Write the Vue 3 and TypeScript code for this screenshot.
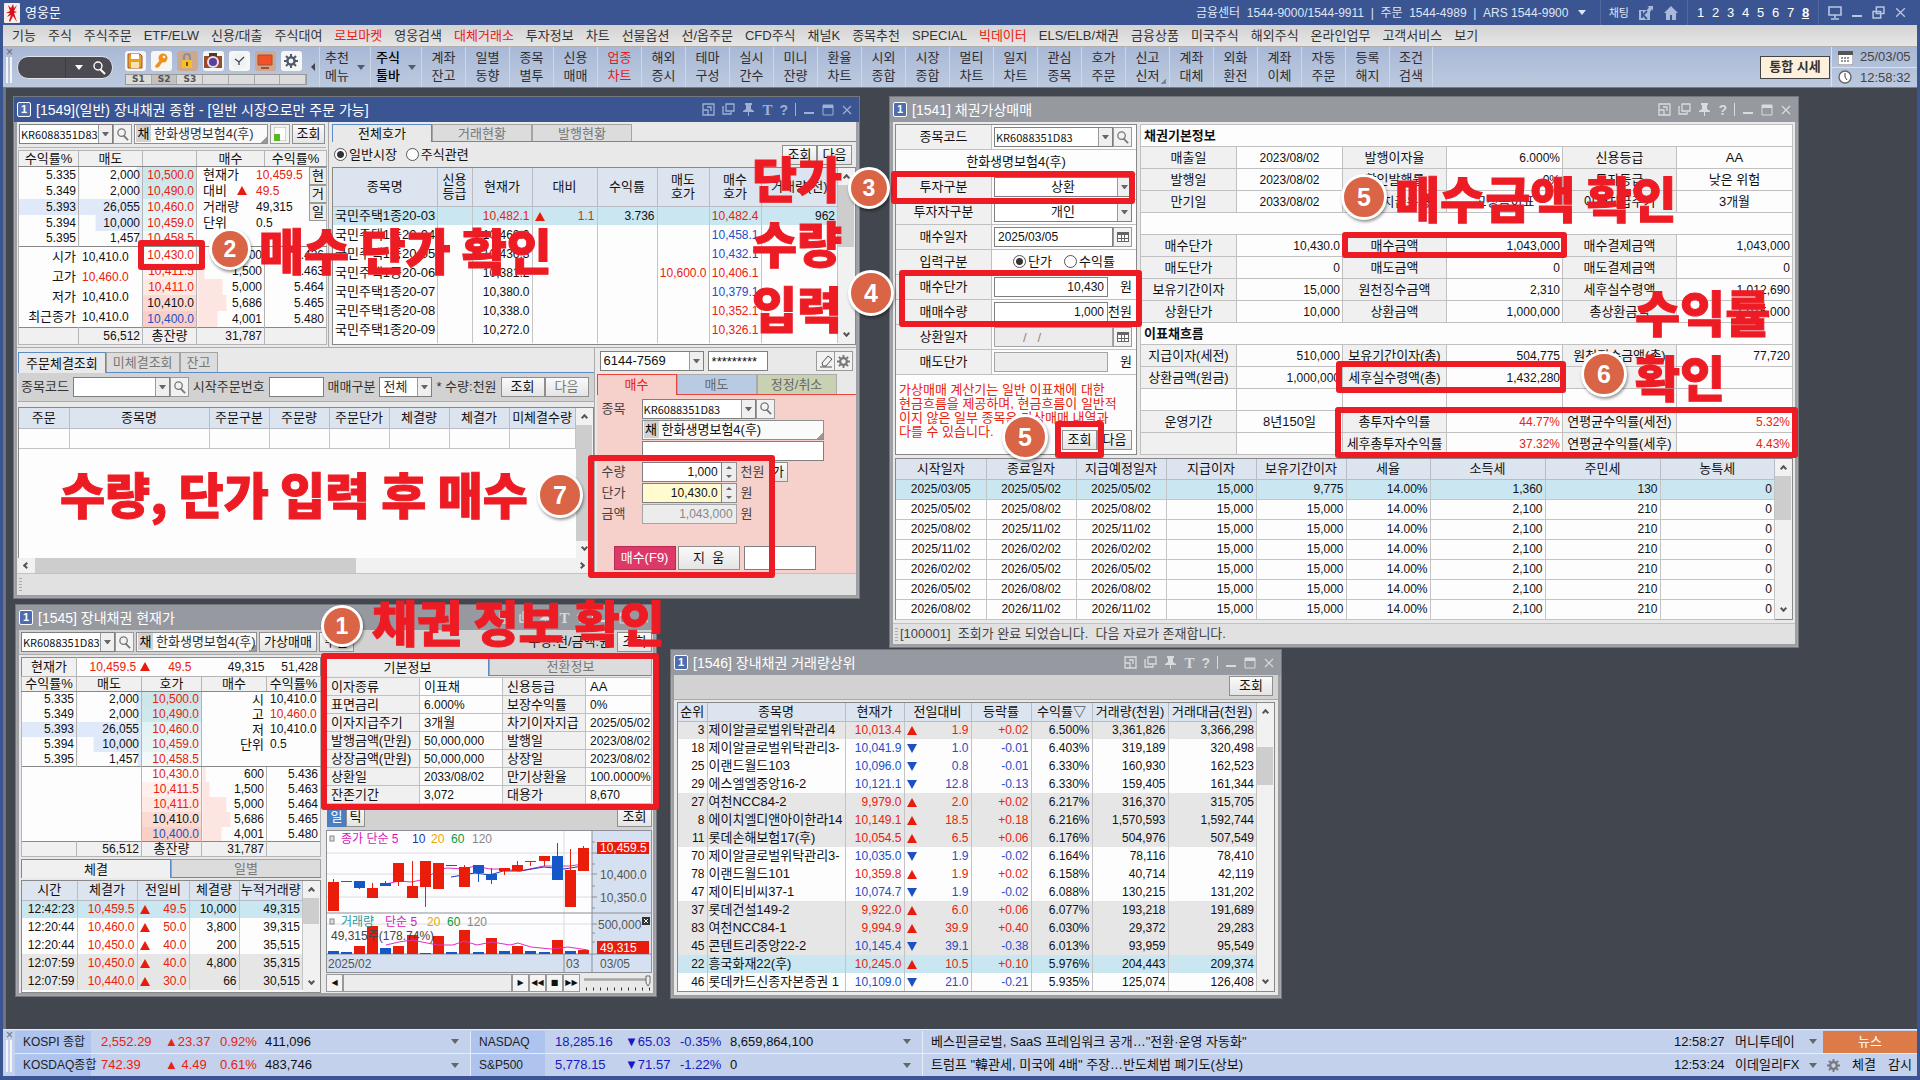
<script setup lang="ts">
interface Win { id: string; title: string; x: number; y: number; w: number; h: number; active?: boolean; textTool?: boolean }
interface Box { x: number; y: number; w: number; h: number }
interface Badge { n: number; x: number; y: number; big?: boolean }
interface Note { x: number; y: number; lines: string[] }
interface Level { yield: string; qty: string; price: string; tone: string; bar: number; bg: string }

const windows: Win[] = [
  { id: '1549', title: '[1549](일반) 장내채권 종합 - [일반 시장으로만 주문 가능]', x: 13, y: 96, w: 847, h: 503, active: true, textTool: true },
  { id: '1541', title: '[1541] 채권가상매매', x: 889, y: 96, w: 910, h: 552 },
  { id: '1545', title: '[1545] 장내채권 현재가', x: 15, y: 604, w: 642, h: 393, textTool: true },
  { id: '1546', title: '[1546] 장내채권 거래량상위', x: 670, y: 649, w: 612, h: 350, textTool: true },
]

const menus = ['기능', '주식', '주식주문', 'ETF/ELW', '신용/대출', '주식대여', '로보마켓', '영웅검색', '대체거래소', '투자정보', '차트', '선물옵션', '선/옵주문', 'CFD주식', '채널K', '종목추천', 'SPECIAL', '빅데이터', 'ELS/ELB/채권', '금융상품', '미국주식', '해외주식', '온라인업무', '고객서비스', '보기']
const hotMenus = ['로보마켓', '대체거래소', '빅데이터']
const shortcuts = ['계좌 잔고', '일별 동향', '종목 별투', '신용 매매', '업종 차트', '해외 증시', '테마 구성', '실시 간수', '미니 잔량', '환율 차트', '시외 종합', '시장 종합', '멀티 차트', '일지 차트', '관심 종목', '호가 주문', '신고 신저', '계좌 대체', '외화 환전', '계좌 이체', '자동 주문', '등록 해지', '조건 검색'].map(s => s.split(' '))

const asks: Level[] = [
  { yield: '5.335', qty: '2,000', price: '10,500.0', tone: 'up', bar: 10, bg: '#cde6ea' },
  { yield: '5.349', qty: '2,000', price: '10,490.0', tone: 'up', bar: 10, bg: '#cfe8ec' },
  { yield: '5.393', qty: '26,055', price: '10,460.0', tone: 'up', bar: 100, bg: '#e2f3f5' },
  { yield: '5.394', qty: '10,000', price: '10,459.0', tone: 'up', bar: 75, bg: '#e6f4f6' },
  { yield: '5.395', qty: '1,457', price: '10,458.5', tone: 'up', bar: 7, bg: '#f2f9fa' },
]
const bids: Level[] = [
  { yield: '5.436', qty: '600', price: '10,430.0', tone: 'up', bar: 4, bg: '#fdfdfe' },
  { yield: '5.463', qty: '1,500', price: '10,411.5', tone: 'up', bar: 11, bg: '#fff0ed' },
  { yield: '5.464', qty: '5,000', price: '10,411.0', tone: 'up', bar: 38, bg: '#fee9e4' },
  { yield: '5.465', qty: '5,686', price: '10,410.0', tone: '', bar: 43, bg: '#fbdad3' },
  { yield: '5.480', qty: '4,001', price: '10,400.0', tone: 'down', bar: 30, bg: '#f9cfc6' },
]
const askBar = (l: Level) => ({ background: `linear-gradient(to left, #e0e9fa ${l.bar}%, transparent ${l.bar}%)` })
const bidBar = (l: Level) => ({ background: `linear-gradient(to right, #fde6e1 ${l.bar}%, transparent ${l.bar}%)` })

const quotes = [
  ['국민주택1종20-03', '', '10,482.1', '1.1', '3.736', '', '10,482.4', '962'],
  ['국민주택1종20-04', '', '10,460.0', '', '', '', '10,458.1', ''],
  ['국민주택1종20-05', '', '10,436.3', '', '', '', '10,432.1', ''],
  ['국민주택1종20-06', '', '10,381.2', '', '', '10,600.0', '10,406.1', ''],
  ['국민주택1종20-07', '', '10,380.0', '', '', '', '10,379.1', ''],
  ['국민주택1종20-08', '', '10,338.0', '', '', '', '10,352.1', ''],
  ['국민주택1종20-09', '', '10,272.0', '', '', '', '10,326.1', ''],
]
const quoteTone = (r: number, c: number) => {
  if (c === 6) return [1, 2, 4].includes(r) ? 'down' : 'up'
  if (c === 5 || (r === 0 && (c === 2 || c === 3))) return 'up'
  return ''
}

const bondInfo: string[][] = [
  ['채권기본정보'],
  ['매출일', '2023/08/02', '발행이자율', '6.000%', '신용등급', 'AA'],
  ['발행일', '2023/08/02', '할인발행률', '0%', '투자등급', '낮은 위험'],
  ['만기일', '2033/08/02', '이자지급유형', '고정금이표', '이자지급주기', '3개월'],
  [''],
  ['매수단가', '10,430.0', '매수금액', '1,043,000', '매수결제금액', '1,043,000'],
  ['매도단가', '0', '매도금액', '0', '매도결제금액', '0'],
  ['보유기간이자', '15,000', '원천징수금액', '2,310', '세후실수령액', '1,012,690'],
  ['상환단가', '10,000', '상환금액', '1,000,000', '총상환금액', '1,015,000'],
  ['이표채흐름'],
  ['지급이자(세전)', '510,000', '보유기간이자(총)', '504,775', '원천징수금액(총)', '77,720'],
  ['상환금액(원금)', '1,000,000', '세후실수령액(총)', '1,432,280', '', ''],
  ['', '', '', '', '', ''],
  ['운영기간', '8년150일', '총투자수익률', '44.77%', '연평균수익률(세전)', '5.32%'],
  ['', '', '세후총투자수익률', '37.32%', '연평균수익률(세후)', '4.43%'],
]
const infoClass = (r: number, c: number, v: string) => [
  c % 2 === 0 ? (r === 12 ? '' : 'lab') : (r <= 3 && c !== 3) || (r === 3) || (r === 13 && c === 1) ? 'c' : 'r',
  isNum(v) ? 'n' : '',
  r >= 13 && c > 1 && c % 2 === 1 ? 'up' : '',
]

const flowDates = ['2025/03/05', '2025/05/02', '2025/08/02', '2025/11/02', '2026/02/02', '2026/05/02', '2026/08/02', '2026/11/02']
const flows = flowDates.slice(0, 7).map((d, i) => [d, flowDates[i + 1], flowDates[i + 1], '15,000', i ? '15,000' : '9,775', '14.00%', i ? '2,100' : '1,360', i ? '210' : '130', '0'])

const trades = [
  ['12:42:23', '10,459.5', '49.5', '10,000', '49,315'],
  ['12:20:44', '10,460.0', '50.0', '3,800', '39,315'],
  ['12:20:44', '10,450.0', '40.0', '200', '35,515'],
  ['12:07:59', '10,450.0', '40.0', '4,800', '35,315'],
  ['12:07:59', '10,440.0', '30.0', '66', '30,515'],
]
const basics = [
  ['이자종류', '이표채', '신용등급', 'AA'],
  ['표면금리', '6.000%', '보장수익률', '0%'],
  ['이자지급주기', '3개월', '차기이자지급', '2025/05/02'],
  ['발행금액(만원)', '50,000,000', '발행일', '2023/08/02'],
  ['상장금액(만원)', '50,000,000', '상장일', '2023/08/02'],
  ['상환일', '2033/08/02', '만기상환율', '100.0000%'],
  ['잔존기간', '3,072', '대용가', '8,670'],
]

const ranks = [
  ['3', '제이알글로벌위탁관리4', '10,013.4', '1.9', '+0.02', '6.500%', '3,361,826', '3,366,298', 'g'],
  ['18', '제이알글로벌위탁관리3-', '10,041.9', '1.0', '-0.01', '6.403%', '319,189', '320,498', ''],
  ['25', '이랜드월드103', '10,096.0', '0.8', '-0.01', '6.330%', '160,930', '162,523', ''],
  ['29', '에스엘엘중앙16-2', '10,121.1', '12.8', '-0.13', '6.330%', '159,405', '161,344', ''],
  ['27', '여천NCC84-2', '9,979.0', '2.0', '+0.02', '6.217%', '316,370', '315,705', 'g'],
  ['8', '에이치엘디앤아이한라14', '10,149.1', '18.5', '+0.18', '6.216%', '1,570,593', '1,592,744', 'g'],
  ['11', '롯데손해보험17(후)', '10,054.5', '6.5', '+0.06', '6.176%', '504,976', '507,549', 'g'],
  ['70', '제이알글로벌위탁관리3-', '10,035.0', '1.9', '-0.02', '6.164%', '78,116', '78,410', ''],
  ['78', '이랜드월드101', '10,359.8', '1.9', '+0.02', '6.158%', '40,714', '42,119', ''],
  ['47', '제이티비씨37-1', '10,074.7', '1.9', '-0.02', '6.088%', '130,215', '131,202', ''],
  ['37', '롯데건설149-2', '9,922.0', '6.0', '+0.06', '6.077%', '193,218', '191,689', 'g'],
  ['83', '여천NCC84-1', '9,994.9', '39.9', '+0.40', '6.030%', '29,372', '29,283', 'g'],
  ['45', '콘텐트리중앙22-2', '10,145.4', '39.1', '-0.38', '6.013%', '93,959', '95,549', 'g'],
  ['22', '흥국화재22(후)', '10,245.0', '10.5', '+0.10', '5.976%', '204,443', '209,374', 'sel'],
  ['46', '롯데카드신종자본증권 1', '10,109.0', '21.0', '-0.21', '5.935%', '125,074', '126,408', ''],
]

/* left, body top, body bottom, wick top, wick bottom, rising, volume top, volume rising */
const candles = [
  [2, 52, 81, 49, 81, 1, 121, 0], [15, 51, 52, 51, 52, 1, 122, 0], [28, 51, 58, 51, 59, 0, 116, 1], [41, 58, 68, 53, 68, 1, 96, 1],
  [54, 53, 56, 51, 56, 0, 118, 0], [67, 33, 52, 33, 56, 1, 116, 1], [81, 56, 68, 31, 68, 1, 105, 1], [94, 31, 57, 31, 77, 1, 123, 0],
  [107, 33, 59, 33, 59, 1, 106, 1], [120, 35, 36, 35, 36, 0, 122, 0], [133, 37, 57, 35, 57, 1, 100, 1], [147, 35, 43, 35, 52, 0, 122, 0],
  [160, 44, 50, 38, 54, 0, 108, 1], [173, 38, 41, 38, 45, 1, 121, 0], [186, 35, 41, 31, 41, 1, 116, 1], [199, 31, 32, 31, 36, 1, 121, 0],
  [213, 26, 31, 26, 36, 1, 122, 0], [226, 26, 50, 13, 50, 0, 110, 1], [239, 40, 77, 19, 77, 1, 121, 0], [252, 18, 41, 16, 41, 1, 120, 1],
]
const candleColor = (up: number) => (up ? '#ea1c0a' : '#1557c8')

const boxes: Box[] = [
  { x: 138, y: 240, w: 67, h: 30 }, { x: 588, y: 455, w: 187, h: 123 }, { x: 891, y: 171, w: 244, h: 33 },
  { x: 899, y: 270, w: 243, h: 57 }, { x: 1055, y: 421, w: 49, h: 37 }, { x: 1342, y: 232, w: 225, h: 26 },
  { x: 1336, y: 361, w: 230, h: 32 }, { x: 1335, y: 407, w: 463, h: 51 }, { x: 321, y: 653, w: 338, h: 157 },
]
const badges: Badge[] = [
  { n: 1, x: 342, y: 626 }, { n: 2, x: 230, y: 249 }, { n: 3, x: 869, y: 188 }, { n: 4, x: 871, y: 293, big: true },
  { n: 5, x: 1025, y: 437, big: true }, { n: 5, x: 1364, y: 197, big: true }, { n: 6, x: 1604, y: 374, big: true }, { n: 7, x: 560, y: 495, big: true },
]
const notes: Note[] = [
  { x: 259, y: 248, lines: ['매수 단가 확인'] },
  { x: 372, y: 620, lines: ['채권 정보 확인'] },
  { x: 752, y: 241, lines: ['단가', '수량', '입력'] },
  { x: 60, y: 492, lines: ['수량, 단가 입력 후 매수'] },
  { x: 1395, y: 196, lines: ['매수금액 확인'] },
  { x: 1635, y: 343, lines: ['수익률', '확인'] },
]

const tickers = [
  { name: 'KOSPI 종합', v: ['2,552.29', '▲23.37', '0.92%', '411,096'], us: 'NASDAQ', u: ['18,285.16', '▼65.03', '-0.35%', '8,659,864,100'], news: '베스핀글로벌, SaaS 프레임워크 공개…"전환·운영 자동화"', time: '12:58:27', src: '머니투데이' },
  { name: 'KOSDAQ종합', v: ['742.39', '▲ 4.49', '0.61%', '483,746'], us: 'S&P500', u: ['5,778.15', '▼71.57', '-1.22%', '0'], news: '트럼프 "韓관세, 미국에 4배" 주장…반도체법 폐기도(상보)', time: '12:53:24', src: '이데일리FX' },
]

const isNum = (s: string) => /^[-+\d.,%/:]+$/.test(s)
const px = (n: number) => `${n}px`
const rect = (b: Box) => ({ left: px(b.x), top: px(b.y), width: px(b.w), height: px(b.h) })
</script>

<template>
  <div class="app">
    <svg width="0" height="0" class="defs" aria-hidden="true">
      <symbol id="i-search" viewBox="0 0 14 14"><circle cx="6" cy="5" r="4" fill="none" stroke="currentColor" stroke-width="1.4" /><path d="M8 8l5 5" stroke="currentColor" stroke-width="2" /></symbol>
      <symbol id="i-lay" viewBox="0 0 13 13"><path d="M1 1h11v11H1zM1 7h5v5M5 4h4v4" fill="none" stroke="currentColor" stroke-width="1.3" /></symbol>
      <symbol id="i-copy" viewBox="0 0 13 13"><path d="M4 1h8v7H4zM2 4H1v7h8v-2" fill="none" stroke="currentColor" stroke-width="1.3" /></symbol>
      <symbol id="i-pin" viewBox="0 0 13 13"><path d="M3 0h7v2H9v4l3 2v1H1V8l3-2V2H3zM6 9h1v4H6z" fill="currentColor" /></symbol>
      <symbol id="i-max" viewBox="0 0 12 12"><path d="M1 1h10v10H1z" fill="none" stroke="currentColor" /><path d="M1 1h10v3H1z" fill="currentColor" /></symbol>
      <symbol id="i-min" viewBox="0 0 12 12"><path d="M1 8h10v2H1z" fill="currentColor" /></symbol>
      <symbol id="i-x" viewBox="0 0 12 12"><path d="M2 2l8 8M10 2l-8 8" stroke="currentColor" stroke-width="1.2" /></symbol>
      <symbol id="i-restore" viewBox="0 0 12 12"><path d="M4 1h7v6H4zM1 5h7v6H1z" fill="none" stroke="currentColor" stroke-width="1.4" /></symbol>
      <symbol id="i-gear" viewBox="0 0 14 14"><circle cx="7" cy="7" r="3.6" fill="none" stroke="currentColor" stroke-width="2.4" /><path d="M7 0v3M7 11v3M0 7h3M11 7h3M2 2l2 2M10 10l2 2M12 2l-2 2M4 10l-2 2" stroke="currentColor" stroke-width="2" /></symbol>
      <symbol id="i-cal" viewBox="0 0 12 12"><path d="M0 1h12v10H0z" fill="#666" /><path d="M1 4h3v3H1zM5 4h2v3H5zM8 4h3v3H8zM1 8h3v2H1zM5 8h2v2H5zM8 8h3v2H8z" fill="#fff" /></symbol>
    </svg>

    <header class="titlebar">
      <svg class="logo" viewBox="0 0 16 20"><rect width="16" height="20" rx="1" fill="#f5f0ee" /><path d="M4 2l3 3 2-4 1 4 3-3-3 6 3 1-3 1 3 9-4-6-3 6-1-1 2-6-4 2 3-4-4 0 4-2z" fill="#d9101c" /></svg>
      <h1>영웅문</h1>
      <div class="phones">금융센터&nbsp; 1544-9000/1544-9911&nbsp; |&nbsp; 주문&nbsp; 1544-4989&nbsp; |&nbsp; ARS 1544-9900 <i class="tri"></i></div>
      <div class="tsec"><span>채팅</span>
        <svg width="16" height="16" viewBox="0 0 16 16"><path d="M1 5h8l2-3-2-1h6v5l-1-2-2 3v8H1z" fill="#a9b9db" /><path d="M4 6v7M9 6l-4 4 4 4" stroke="#3a5591" stroke-width="1.8" fill="none" /></svg>
        <svg width="16" height="16" viewBox="0 0 16 16"><path d="M8 1l7 7h-2v7h-4v-5H7v5H3V8H1z" fill="#a9b9db" /></svg>
      </div>
      <nav class="pages"><a v-for="n in 8" :key="n" href="#" :class="{ on: n === 8 }">{{ n }}</a></nav>
      <div class="wbtn">
        <button type="button" aria-label="모니터"><svg width="14" height="14" viewBox="0 0 14 14"><path d="M1 1h12v8H1zM7 9v3M3 13h8" fill="none" stroke="currentColor" stroke-width="1.6" /></svg></button>
        <button type="button" aria-label="최소화"><svg width="12" height="12"><use href="#i-min" /></svg></button>
        <button type="button" aria-label="이전 크기"><svg width="13" height="13"><use href="#i-restore" /></svg></button>
        <button type="button" aria-label="닫기"><svg width="13" height="13"><use href="#i-x" /></svg></button>
      </div>
    </header>

    <nav class="menubar"><a v-for="m in menus" :key="m" href="#" :class="{ hot: hotMenus.includes(m) }">{{ m }}</a></nav>

    <div class="toolbar">
      <div class="grip"><span>×</span><i></i></div>
      <div class="pill"><input type="text" aria-label="화면 검색"><i class="tri"></i><svg width="14" height="14"><use href="#i-search" /></svg></div>
      <div class="quick">
        <div class="qicons">
          <button type="button" aria-label="저장"><svg viewBox="0 0 20 20"><path d="M3 3h12l2 2v12H3z" fill="#e8a020" stroke="#a0522d" /><rect x="6" y="3" width="8" height="5" fill="#fff" /><rect x="6" y="11" width="8" height="6" fill="#f7e3b0" /></svg></button>
          <button type="button" aria-label="열쇠"><svg viewBox="0 0 20 20"><circle cx="12" cy="7" r="4.5" fill="#f0901c" /><circle cx="13" cy="6" r="1.3" fill="#fff" /><path d="M9 9l-5 6 1 2 3-1 4-6z" fill="#f0901c" /></svg></button>
          <button type="button" class="tan" aria-label="잠금"><svg viewBox="0 0 20 20"><path d="M7 9V6a3 3 0 0 1 6 0v3" fill="none" stroke="#8a8f99" stroke-width="2" /><rect x="5" y="9" width="10" height="8" fill="#f4bf2a" /><rect x="9" y="11" width="2" height="4" fill="#7a4b12" /></svg></button>
          <button type="button" aria-label="캡처"><svg viewBox="0 0 20 20"><path d="M1 5h18v12H1z" fill="#9a4a2c" /><path d="M6 2h8v4H6z" fill="#5a3524" /><circle cx="10" cy="11" r="6" fill="#e8dfe8" /><circle cx="10" cy="11" r="4" fill="#5b3f9a" /></svg></button>
          <button type="button" aria-label="시계"><svg viewBox="0 0 20 20"><circle cx="10" cy="10" r="8" fill="#eef2f4" /><path d="M6 8l4 3 5-5M10 11v3" stroke="#444" stroke-width="1.3" fill="none" /></svg></button>
          <button type="button" class="tan" aria-label="화면"><svg viewBox="0 0 20 20"><path d="M3 4h14v10H3z" fill="#f2512a" stroke="#a05238" /><path d="M6 16h8v2H6z" fill="#a05238" /></svg></button>
          <button type="button" class="gearb" aria-label="설정"><svg viewBox="-3 -3 20 20"><use href="#i-gear" width="14" height="14" /></svg></button>
        </div>
        <div class="slots"><span>S1</span><span class="on">S2</span><span>S3</span><span></span><span></span><span></span><span></span></div>
      </div>
      <i class="left"></i>
      <button type="button" class="sc wide"><span>추천<br>메뉴</span><i class="tri"></i></button>
      <button type="button" class="sc wide strong"><span>주식<br>툴바</span><i class="tri"></i></button>
      <button v-for="s in shortcuts" :key="s.join('')" type="button" class="sc" :class="{ hot: s[0] === '업종', more: s[0] === '신고' }"><span>{{ s[0] }}<br>{{ s[1] }}</span></button>
      <button type="button" class="mix">통합 시세</button>
      <div class="clock">
        <div><svg width="15" height="15" viewBox="0 0 15 15"><path d="M0 2h15v13H0z" fill="#fff" stroke="#777" /><path d="M0 1h15v4H0z" fill="#555" /><path d="M3 8h9M3 11h9" stroke="#999" stroke-dasharray="2 1" stroke-width="2" /></svg><time>25/03/05</time></div>
        <div><svg width="15" height="15" viewBox="0 0 15 15"><circle cx="7" cy="7" r="6" fill="#fff" stroke="#666" stroke-width="1.4" /><path d="M7 3v4l2 3" stroke="#444" fill="none" /></svg><time>12:58:32</time></div>
      </div>
    </div>

    <main class="desktop">
      <section v-for="w in windows" :key="w.id" class="win" :class="{ active: w.active }" :style="rect(w)">
        <header class="wt">
          <b class="one">1</b><h2>{{ w.title }}</h2>
          <svg width="13" height="13"><use href="#i-lay" /></svg>
          <svg width="13" height="13"><use href="#i-copy" /></svg>
          <svg width="13" height="13"><use href="#i-pin" /></svg>
          <b v-if="w.textTool" class="tt">T</b><b class="qq">?</b><i></i>
          <svg width="12" height="12"><use href="#i-min" /></svg>
          <svg width="12" height="12"><use href="#i-max" /></svg>
          <svg width="12" height="12"><use href="#i-x" /></svg>
        </header>

        <!-- 1549 장내채권 종합 -->
        <div v-if="w.id === '1549'" class="body b1549">
          <div class="upper">
            <div class="ul">
              <div class="bar">
                <select class="code kr" aria-label="종목코드"><option>KR6088351D83</option></select>
                <button type="button" class="sb" aria-label="검색"><svg width="13" height="13"><use href="#i-search" /></svg></button>
                <div class="stock"><b>채</b>한화생명보험4(후)</div>
                <button type="button" class="gridb" aria-label="배열"><svg width="12" height="14" viewBox="0 0 12 14"><path d="M0 0h12v14H0z" fill="#fff" stroke="#aaa" /><path d="M0 7h6v7H0z" fill="#58b81f" /></svg></button>
                <button type="button" class="btn w33">조회</button>
              </div>
              <table class="book">
                <colgroup><col style="width:60px"><col style="width:64px"><col style="width:54px"><col style="width:68px"><col style="width:62px"></colgroup>
                <thead><tr><th>수익률%</th><th>매도</th><th></th><th>매수</th><th>수익률%</th></tr></thead>
                <tbody>
                  <tr v-for="(l, i) in asks" :key="l.price">
                    <td class="n" :class="{ lit: i === 2 }">{{ l.yield }}</td><td class="n" :style="askBar(l)">{{ l.qty }}</td>
                    <td class="n pr" :class="l.tone" :style="{ background: l.bg }">{{ l.price }}</td>
                    <td v-if="i === 0" colspan="2" rowspan="5" class="info">
                      <div class="inf">
                        <dl><dt>현재가</dt><dd class="n up">10,459.5</dd><dt>대비 <i class="au"></i></dt><dd class="n up">49.5</dd><dt>거래량</dt><dd class="n">49,315</dd><dt>단위</dt><dd class="n">0.5</dd></dl>
                        <div class="side"><button type="button">현</button><button type="button">거</button><button type="button">일</button></div>
                      </div>
                    </td>
                  </tr>
                  <tr v-for="(l, i) in bids" :key="l.price" :class="{ cut: i === 0 }">
                    <td v-if="i === 0" colspan="2" rowspan="5" class="info"><dl class="ohl"><dt>시가</dt><dd class="n">10,410.0</dd><dt>고가</dt><dd class="n up">10,460.0</dd><dt>저가</dt><dd class="n">10,410.0</dd><dt>최근종가</dt><dd class="n">10,410.0</dd></dl></td>
                    <td class="n pr" :class="l.tone" :style="{ background: l.bg }">{{ l.price }}</td>
                    <td class="n" :style="bidBar(l)">{{ l.qty }}</td><td class="n">{{ l.yield }}</td>
                  </tr>
                </tbody>
                <tfoot><tr><td></td><td class="n">56,512</td><td class="c">총잔량</td><td class="n">31,787</td><td></td></tr></tfoot>
              </table>
            </div>
            <div class="ur">
              <div class="tabs t100"><button type="button" class="on">전체호가</button><button type="button">거래현황</button><button type="button">발행현황</button></div>
              <div class="radios">
                <label><input type="radio" name="mkt" checked>일반시장</label><label><input type="radio" name="mkt">주식관련</label>
                <button type="button" class="btn w35 push">조회</button><button type="button" class="btn w35">다음</button>
              </div>
              <div class="scroller">
                <table class="grid quotes">
                  <colgroup><col style="width:104px"><col style="width:35px"><col style="width:60px"><col style="width:65px"><col style="width:60px"><col style="width:52px"><col style="width:52px"><col></colgroup>
                  <thead><tr><th>종목명</th><th>신용<br>등급</th><th>현재가</th><th>대비</th><th>수익률</th><th>매도<br>호가</th><th>매수<br>호가</th><th>거래량(천)</th></tr></thead>
                  <tbody>
                    <tr v-for="(q, r) in quotes" :key="q[0]" :class="{ sel: r === 0 }">
                      <td v-for="(v, c) in q" :key="c" :class="[c ? 'r' : '', isNum(v) ? 'n' : '', quoteTone(r, c)]"><i v-if="c === 3 && v" class="au fl"></i>{{ v }}</td>
                    </tr>
                    <tr class="rest"><td v-for="c in 8" :key="c"></td></tr>
                  </tbody>
                </table>
                <div class="vs"><i class="u"></i><b class="th62"></b><i class="d"></i></div>
              </div>
            </div>
          </div>
          <div class="lower">
            <div class="ll">
              <div class="tabs ord"><button type="button" class="on">주문체결조회</button><button type="button">미체결조회</button><button type="button">잔고</button></div>
              <div class="filter">
                <label for="fcode">종목코드</label><select id="fcode" class="w97"><option></option></select><button type="button" class="sb" aria-label="검색"><svg width="13" height="13"><use href="#i-search" /></svg></button>
                <label for="fno">시작주문번호</label><input id="fno" type="text" class="w55">
                <label for="fkind">매매구분</label><select id="fkind" class="w53"><option>전체</option></select>
                <span>* 수량:천원</span><button type="button" class="btn">조회</button><button type="button" class="btn dim">다음</button>
              </div>
              <div class="scroller orders">
                <div class="ot">
                  <table class="grid">
                    <colgroup><col style="width:50px"><col style="width:140px"><col style="width:60px"><col style="width:60px"><col style="width:60px"><col style="width:60px"><col style="width:60px"><col></colgroup>
                    <thead><tr><th>주문</th><th>종목명</th><th>주문구분</th><th>주문량</th><th>주문단가</th><th>체결량</th><th>체결가</th><th>미체결수량</th></tr></thead>
                    <tbody><tr><td v-for="c in 8" :key="c"></td></tr></tbody>
                  </table>
                </div>
                <div class="vs"><i class="u"></i><b class="full"></b><i class="d"></i></div>
              </div>
              <div class="hs"><i class="l"></i><b></b><i class="r"></i></div>
            </div>
            <div class="lr">
              <div class="acct">
                <select class="w104" aria-label="계좌번호"><option>6144-7569</option></select><input type="text" class="w60" value="*********" aria-label="비밀번호">
                <button type="button" class="sb push" aria-label="지우기"><svg width="14" height="14" viewBox="0 0 14 14"><path d="M3 9l6-7 4 3-6 7H4zM1 13h12" fill="none" stroke="#555" /></svg></button><button type="button" class="sb" aria-label="설정"><svg width="13" height="13"><use href="#i-gear" /></svg></button>
              </div>
              <div class="otabs"><button type="button" class="buy">매수</button><button type="button" class="sell">매도</button><button type="button" class="fix">정정/취소</button></div>
              <form class="order" @submit.prevent>
                <div class="f"><label for="ocode">종목</label><select id="ocode" class="w114 kr"><option>KR6088351D83</option></select><button type="button" class="sb" aria-label="검색"><svg width="13" height="13"><use href="#i-search" /></svg></button></div>
                <div class="f in"><div class="stock w182"><b>채</b>한화생명보험4(후)</div></div>
                <div class="f in"><input type="text" class="w182" aria-label="비고"></div>
                <div class="f"><label for="oq">수량</label><input id="oq" type="text" class="w80 n" value="1,000"><span class="spin"><i class="au"></i><i class="ad"></i></span><em>천원</em><button type="button" class="btn tiny">가</button></div>
                <div class="f"><label for="op">단가</label><input id="op" type="text" class="w80 n yel" value="10,430.0"><span class="spin"><i class="au"></i><i class="ad"></i></span><em>원</em></div>
                <div class="f"><label for="oa">금액</label><input id="oa" type="text" class="w95 n" value="1,043,000" disabled><em>원</em></div>
                <div class="act"><button type="submit" class="btn go">매수(F9)</button><button type="reset" class="btn">지&nbsp; 움</button><input type="text" class="w72" aria-label="메모"></div>
              </form>
            </div>
          </div>
          <footer class="status"><i></i></footer>
        </div>

        <!-- 1541 채권가상매매 -->
        <div v-else-if="w.id === '1541'" class="body b1541">
          <div class="two">
            <form class="calc" @submit.prevent>
              <div class="row"><label for="c1">종목코드</label><div><select id="c1" class="grow kr"><option>KR6088351D83</option></select><button type="button" class="sb" aria-label="검색"><svg width="13" height="13"><use href="#i-search" /></svg></button></div></div>
              <div class="row mid">한화생명보험4(후)</div>
              <div class="row"><label for="c2">투자구분</label><div><select id="c2" class="grow ctr"><option>상환</option></select></div></div>
              <div class="row"><label for="c3">투자자구분</label><div><select id="c3" class="grow ctr"><option>개인</option></select></div></div>
              <div class="row"><label for="c4">매수일자</label><div><input id="c4" type="text" class="grow n lft" value="2025/03/05"><button type="button" class="sb" aria-label="달력"><svg width="12" height="12"><use href="#i-cal" /></svg></button></div></div>
              <div class="row"><span class="lb">입력구분</span><div class="rd"><label><input type="radio" name="inp" checked>단가</label><label><input type="radio" name="inp">수익률</label></div></div>
              <div class="row"><label for="c5">매수단가</label><div><input id="c5" type="text" class="w114 n" value="10,430"><em>원</em></div></div>
              <div class="row"><label for="c6">매매수량</label><div><input id="c6" type="text" class="w114 n" value="1,000"><em>천원</em></div></div>
              <div class="row"><label for="c7">상환일자</label><div><input id="c7" type="text" class="grow slashes" value="/   /" disabled><button type="button" class="sb" aria-label="달력"><svg width="12" height="12"><use href="#i-cal" /></svg></button></div></div>
              <div class="row"><label for="c8">매도단가</label><div><input id="c8" type="text" class="w114" disabled><em>원</em></div></div>
              <p>가상매매 계산기는 일반 이표채에 대한<br>현금흐름을 제공하며, 현금흐름이 일반적<br>이지 않은 일부 종목은 가상매매 내역과<br>다를 수 있습니다.</p>
              <div class="cb"><button type="submit" class="btn w35">조회</button><button type="button" class="btn w35">다음</button></div>
            </form>
            <table class="binfo">
              <colgroup><col style="width:96px"><col style="width:106px"><col style="width:104px"><col style="width:116px"><col style="width:114px"><col></colgroup>
              <tbody>
                <tr v-for="(row, r) in bondInfo" :key="r">
                  <th v-if="row.length === 1" colspan="6" scope="colgroup">{{ row[0] }}</th>
                  <template v-else><td v-for="(v, c) in row" :key="c" :class="infoClass(r, c, v)">{{ v }}</td></template>
                </tr>
              </tbody>
            </table>
          </div>
          <div class="scroller flow">
            <table class="grid">
              <colgroup><col style="width:90px"><col style="width:90px"><col style="width:90px"><col style="width:90px"><col style="width:90px"><col style="width:84px"><col style="width:115px"><col style="width:115px"><col></colgroup>
              <thead><tr><th>시작일자</th><th>종료일자</th><th>지급예정일자</th><th>지급이자</th><th>보유기간이자</th><th>세율</th><th>소득세</th><th>주민세</th><th>농특세</th></tr></thead>
              <tbody><tr v-for="(f, r) in flows" :key="r" :class="{ sel: r === 0 }"><td v-for="(v, c) in f" :key="c" class="n" :class="c < 3 ? 'c' : 'r'">{{ v }}</td></tr></tbody>
            </table>
            <div class="vs"><i class="u"></i><b class="th44"></b><i class="d"></i></div>
          </div>
          <footer class="status"><i></i>[100001]&nbsp; 조회가 완료 되었습니다.&nbsp; 다음 자료가 존재합니다.</footer>
        </div>

        <!-- 1545 장내채권 현재가 -->
        <div v-else-if="w.id === '1545'" class="body b1545">
          <div class="bar gray">
            <select class="code kr" aria-label="종목코드"><option>KR6088351D83</option></select>
            <button type="button" class="sb" aria-label="검색"><svg width="13" height="13"><use href="#i-search" /></svg></button>
            <div class="stock"><b>채</b>한화생명보험4(후)</div>
            <button type="button" class="btn w58">가상매매</button><button type="button" class="btn w35">주문</button>
            <span class="push unit">*수량:천/금액:원</span><button type="button" class="btn w35">조회</button>
          </div>
          <div class="cols">
            <div class="cl">
              <table class="book small">
                <colgroup><col style="width:55px"><col style="width:65px"><col style="width:60px"><col style="width:65px"><col></colgroup>
                <thead>
                  <tr class="now"><th>현재가</th><td colspan="2" class="n up">10,459.5 <i class="au"></i><span>49.5</span></td><td class="n">49,315</td><td class="n">51,428</td></tr>
                  <tr><th>수익률%</th><th>매도</th><th>호가</th><th>매수</th><th>수익률%</th></tr>
                </thead>
                <tbody>
                  <tr v-for="(l, i) in asks" :key="l.price">
                    <td class="n" :class="{ lit: i === 2 }">{{ l.yield }}</td><td class="n" :style="askBar(l)">{{ l.qty }}</td>
                    <td class="n pr" :class="l.tone" :style="{ background: l.bg }">{{ l.price }}</td>
                    <td v-if="i === 0" colspan="2" rowspan="5" class="info"><dl class="ohl2"><dt>시</dt><dd class="n">10,410.0</dd><dt>고</dt><dd class="n up">10,460.0</dd><dt>저</dt><dd class="n">10,410.0</dd><dt>단위</dt><dd class="n">0.5</dd></dl></td>
                  </tr>
                  <tr v-for="(l, i) in bids" :key="l.price" :class="{ cut: i === 0 }">
                    <td v-if="i === 0" colspan="2" rowspan="5" class="info"></td>
                    <td class="n pr" :class="l.tone" :style="{ background: l.bg }">{{ l.price }}</td>
                    <td class="n" :style="bidBar(l)">{{ l.qty }}</td><td class="n">{{ l.yield }}</td>
                  </tr>
                </tbody>
                <tfoot><tr><td></td><td class="n">56,512</td><td class="c">총잔량</td><td class="n">31,787</td><td></td></tr></tfoot>
              </table>
              <div class="tabs half"><button type="button" class="on">체결</button><button type="button">일별</button></div>
              <div class="scroller">
                <table class="grid trades">
                  <colgroup><col style="width:55px"><col style="width:60px"><col style="width:52px"><col style="width:50px"><col></colgroup>
                  <thead><tr><th>시간</th><th>체결가</th><th>전일비</th><th>체결량</th><th>누적거래량</th></tr></thead>
                  <tbody>
                    <tr v-for="(t, r) in trades" :key="r" :class="{ sel: r === 0, g: r > 2 }">
                      <td v-for="(v, c) in t" :key="c" class="n r" :class="{ up: c === 1 || c === 2 }"><i v-if="c === 2" class="au fl"></i>{{ v }}</td>
                    </tr>
                  </tbody>
                </table>
                <div class="vs"><i class="u"></i><b class="th26"></b><i class="d"></i></div>
              </div>
            </div>
            <div class="cr">
              <div class="tabs half2"><button type="button" class="on">기본정보</button><button type="button">전환정보</button></div>
              <table class="basic">
                <colgroup><col style="width:93px"><col style="width:83px"><col style="width:83px"><col></colgroup>
                <tbody><tr v-for="b in basics" :key="b[0]"><td v-for="(v, c) in b" :key="c" :class="{ lab: c % 2 === 0, n: isNum(v) }">{{ v }}</td></tr></tbody>
              </table>
              <div class="cbar"><button type="button" class="day">일</button><button type="button" class="btn tiny">틱</button><button type="button" class="btn w35 push">조회</button></div>
              <svg class="chart" viewBox="0 0 326 143" width="326" height="143">
                <rect width="326" height="143" fill="#fdfdff" /><rect x="266" width="60" height="143" fill="#d5e1f0" /><rect y="124" width="326" height="19" fill="#d5e1f0" />
                <path d="M0 23h266M0 44h266M0 67h266M0 94h266M238 0v124" stroke="#dcdcdc" />
                <path d="M0 83h326M0 124h326M266 0v143M238 124v19" stroke="#8c8f95" fill="none" />
                <path d="M266 23h5M266 44h5M266 67h5M266 94h5M266 12h3M266 34h3M266 56h3M266 78h3M266 103h3M266 112h3" stroke="#8c8f95" />
                <polyline points="60,54 73,51 86,52 99,49 112,40 121,38 138,39 149,36 164,39 177,39 194,41 218,36 244,36 257,34" fill="none" stroke="#e030c0" />
                <polyline points="125,47 149,43 164,45 177,41 194,41 218,37 238,39 257,36" fill="none" stroke="#2438b0" />
                <g v-for="(c, i) in candles" :key="i">
                  <rect :x="c[0] + 5" :y="c[3]" width="1" :height="c[4] - c[3]" :fill="candleColor(c[5])" />
                  <rect :x="c[0]" :y="c[1]" width="11" :height="c[2] - c[1]" :fill="candleColor(c[5])" />
                  <rect :x="c[0]" :y="c[6]" width="11" :height="124 - c[6]" :fill="candleColor(c[7])" />
                </g>
                <polyline points="60,115 73,112 86,110 101,113 112,115 127,115 138,111 151,115 166,112 184,115 192,113 205,117 225,119 242,117 262,120" fill="none" stroke="#e030c0" />
                <rect x="4" y="6" width="4" height="5" fill="#ddd" stroke="#888" /><rect x="4" y="89" width="4" height="5" fill="#ddd" stroke="#888" />
                <g class="leg">
                  <text x="15" y="13" fill="#d818b8">종가 단순 5</text><text x="86" y="13" fill="#1a34b8">10</text><text x="105" y="13" fill="#e8a800">20</text><text x="125" y="13" fill="#0a9a3a">60</text><text x="146" y="13" fill="#888">120</text>
                  <text x="15" y="96" fill="#2a9a9a">거래량</text><text x="59" y="96" fill="#d818b8">단순 5</text><text x="101" y="96" fill="#e8a800">20</text><text x="121" y="96" fill="#0a9a3a">60</text><text x="141" y="96" fill="#888">120</text>
                  <text x="5" y="110" fill="#444">49,315주(178.74%)</text>
                  <text x="274" y="49" fill="#555">10,400.0</text><text x="274" y="72" fill="#555">10,350.0</text><text x="272" y="99" fill="#555">500,000</text>
                  <rect x="271" y="12" width="52" height="12" fill="#e81c0c" /><text x="274" y="22" fill="#fff">10,459.5</text>
                  <rect x="271" y="111" width="52" height="13" fill="#e81c0c" /><text x="274" y="122" fill="#fff">49,315</text>
                  <rect x="316" y="87" width="8" height="8" fill="#333" /><path d="M318 89l4 4M322 89l-4 4" stroke="#fff" />
                  <text x="2" y="138" fill="#555">2025/02</text><text x="240" y="138" fill="#555">03</text><text x="274" y="138" fill="#555">03/05</text>
                </g>
              </svg>
              <div class="play">
                <button type="button" aria-label="왼쪽">◀</button><span></span><button type="button" aria-label="오른쪽">▶</button><button type="button" aria-label="뒤로">◀◀</button><button type="button" aria-label="정지">■</button><button type="button" aria-label="앞으로">▶▶</button>
                <svg width="72" height="17" viewBox="0 0 72 17"><path d="M4 5h66M4 6h66" stroke="#888" /><path d="M66 2h4v7l-2 3-2-3z" fill="#eee" stroke="#666" /><path d="M6 15h64" stroke="#333" stroke-width="3" stroke-dasharray="1 6" /></svg>
              </div>
            </div>
          </div>
        </div>

        <!-- 1546 거래량상위 -->
        <div v-else class="body b1546">
          <div class="bar gray"><button type="button" class="btn push w44">조회</button></div>
          <div class="scroller">
            <table class="grid ranks">
              <colgroup><col style="width:29px"><col style="width:138px"><col style="width:59px"><col style="width:67px"><col style="width:60px"><col style="width:61px"><col style="width:76px"><col></colgroup>
              <thead><tr><th>순위</th><th>종목명</th><th>현재가</th><th>전일대비</th><th>등락률</th><th>수익률▽</th><th>거래량(천원)</th><th>거래대금(천원)</th></tr></thead>
              <tbody>
                <tr v-for="(k, r) in ranks" :key="r" :class="k[8]">
                  <td v-for="(v, c) in k.slice(0, 8)" :key="c" :class="[c === 1 ? 'name' : 'r n', c > 1 && c < 5 ? (k[4][0] === '+' ? 'up' : 'down') : '']"><i v-if="c === 3" class="fl" :class="k[4][0] === '+' ? 'au' : 'ad'"></i>{{ v }}</td>
                </tr>
              </tbody>
            </table>
            <div class="vs"><i class="u"></i><b class="th38"></b><i class="d"></i></div>
          </div>
        </div>
      </section>

      <div v-for="(b, i) in boxes" :key="'b' + i" class="mark" :style="rect(b)"></div>
      <p v-for="(t, i) in notes" :key="'t' + i" class="note" :style="{ left: px(t.x), top: px(t.y) }"><span v-for="l in t.lines" :key="l">{{ l }}</span></p>
      <b v-for="(b, i) in badges" :key="'n' + i" class="badge" :class="{ big: b.big }" :style="{ left: px(b.x), top: px(b.y) }">{{ b.n }}</b>
    </main>

    <footer class="ticker">
      <div class="grip"><span>×</span><i></i></div>
      <div class="rows">
        <div v-for="(t, i) in tickers" :key="t.name" class="trow">
          <b class="nm">{{ t.name }}</b>
          <div class="vals up"><span>{{ t.v[0] }}</span><span>{{ t.v[1] }}</span><span>{{ t.v[2] }}</span><span class="k">{{ t.v[3] }}</span><i class="tri"></i></div>
          <b class="nm us">{{ t.us }}</b>
          <div class="vals navy"><span>{{ t.u[0] }}</span><span>{{ t.u[1] }}</span><span>{{ t.u[2] }}</span><span class="k">{{ t.u[3] }}</span><i class="tri"></i></div>
          <a href="#" class="news">{{ t.news }}</a>
          <span class="tm">{{ t.time }}</span><span class="src">{{ t.src }}</span><i class="tri"></i>
          <button v-if="i === 0" type="button" class="nb">뉴스</button>
          <div v-else class="nb2"><svg width="13" height="13"><use href="#i-gear" /></svg><span>체결</span><span>감시</span></div>
        </div>
      </div>
    </footer>
  </div>
</template>

<style>
html, body { margin: 0; background: #3a5591; }
</style>

<style scoped>
.app { position: relative; display: flex; flex-direction: column; min-height: 100vh; box-sizing: border-box; padding: 0 3px 4px; background: #3a5591; overflow: hidden; color: #111; font: 13px/16px "Liberation Sans", "Noto Sans CJK KR", sans-serif; }
.app *, .app *::before { box-sizing: border-box; }
.defs { position: absolute; }
button, input, select { font: inherit; color: inherit; margin: 0; padding: 0; border-radius: 0; outline: 0; }
a { color: inherit; text-decoration: none; }
h1, h2, p, dl, dd { margin: 0; font-size: 13px; font-weight: 400; }
i, em { font-style: normal; }
svg { flex: none; }
.n, dd.n { font-size: 12px; }
.up { color: #e8220f; }
.down { color: #1e4fc4; }
.push { margin-left: auto; }
.tri { display: inline-block; flex: none; border: 4px solid transparent; border-top: 5px solid currentColor; border-bottom: 0; }
.au { display: inline-block; border: 5px solid transparent; border-bottom: 9px solid #e81c0c; border-top: 0; }
.ad { display: inline-block; border: 5px solid transparent; border-top: 9px solid #1e4fc4; border-bottom: 0; }

.titlebar { display: flex; align-items: center; height: 25px; color: #dfe6f5; }
.logo { width: 16px; height: 20px; margin-left: 1px; }
.titlebar h1 { margin-left: 5px; color: #fff; }
.phones { margin-left: auto; padding-right: 14px; font-size: 12px; }
.phones .tri { margin-left: 6px; vertical-align: 2px; }
.tsec { display: flex; align-items: center; gap: 9px; height: 25px; padding: 0 8px; border-left: 1px solid #52699f; border-right: 1px solid #52699f; font-size: 11px; }
.pages { display: flex; padding: 0 5px; }
.pages a { width: 15px; text-align: center; color: #fff; font-size: 13px; line-height: 16px; }
.pages .on { font-weight: 700; text-decoration: underline; }
.wbtn { display: flex; gap: 9px; align-items: center; height: 25px; padding: 0 10px 0 9px; border-left: 1px solid #52699f; }
.wbtn button { display: flex; border: 0; background: none; color: #b9c6e2; }

.menubar { display: flex; align-items: center; gap: 12px; height: 22px; padding-left: 9px; background: linear-gradient(#d3d3d3, #e6e6e6); border-bottom: 1px solid #b0b0b0; color: #333; white-space: nowrap; }
.menubar .hot { color: #e8220f; }

.toolbar { display: flex; height: 41px; background: linear-gradient(#a9b8d6, #bccadf); border-bottom: 1px solid #777d88; white-space: nowrap; }
.grip { flex: none; width: 12px; padding-left: 3px; color: #667; line-height: 10px; font-size: 12px; }
.grip i { display: block; width: 6px; height: 26px; border: solid #f2f4f8; border-width: 0 2px; }
.pill { display: flex; flex: none; align-items: center; width: 96px; height: 23px; margin: 9px 12px 0 2px; padding-right: 10px; border: 1px solid #dfe4ee; border-radius: 11px; background: #4c4b52; color: #fff; gap: 9px; }
.pill input[type="text"] { width: 48px; flex: none; border: 0; border-right: 1px solid #3c3b42; background: none; height: 20px; }
.quick { width: 182px; flex: none; padding-top: 4px; }
.qicons { display: flex; gap: 5px; }
.qicons button { display: flex; width: 21px; height: 20px; border: 0; border-radius: 3px; background: #f6f6f4; }
.qicons .tan { background: #cfa88d; }
.qicons .gearb { color: #4d5a70; }
.slots { display: flex; margin-top: 3px; height: 11px; border: 1px solid #999; background: #dcdcdc; font: 700 9px/9px "DejaVu Sans", sans-serif; color: #555; }
.slots span { flex: 1; border-right: 1px solid #aaa; text-align: center; }
.slots .on { background: #c2c2c2; }
.left { flex: none; align-self: center; margin: 0 4px; border: 4px solid transparent; border-right: 4px solid #445; border-left: 0; }
.sc { display: flex; align-items: center; justify-content: center; width: 44px; flex: none; border: 0; border-left: 1px solid #cdd7e8; background: none; color: #2d2d33; line-height: 18px; }
.sc.hot { color: #e01c1c; }
.more { background: linear-gradient(135deg, transparent 50%, #7c8698 50%) right 3px bottom 3px / 5px 5px no-repeat; }
.sc:nth-last-of-type(2) { border-right: 1px solid #cdd7e8; }
.wide { width: 51px; gap: 8px; }
.wide .tri { color: #555c68; }
.strong { font-weight: 500; color: #000; }
.mix { align-self: center; width: 70px; height: 23px; flex: none; margin-left: auto; border: 1px solid #444; background: #fdf1dc; font-weight: 700; color: #333; }
.clock { width: 86px; flex: none; margin-left: 1px; border-left: 1px solid #dbe2ee; color: #444; }
.clock div { display: flex; align-items: center; gap: 7px; height: 20px; padding-left: 6px; }
.clock div + div { border-top: 1px solid #dbe2ee; }

.desktop { flex: 1; border-left: 3px solid #6e7480; background: #42464f; }
.win { position: absolute; display: flex; flex-direction: column; padding: 0 3px 3px; border: 1px solid #74777c; background: #9c9ea3; box-shadow: inset 0 0 0 1px #a6a8ac; }
.wt { display: flex; align-items: center; gap: 7px; height: 25px; flex: none; margin: 0 -3px; padding: 0 6px 0 3px; background: #9699a0; color: #d9dbde; }
.active .wt { background: #3a5591; color: #9fb0d5; }
.one { width: 14px; height: 15px; border: 1px solid #fff; border-radius: 2px; background: #4e6cb0; color: #fff; font: 700 11px/13px "Liberation Sans", sans-serif; text-align: center; }
.wt h2 { flex: 1; margin-left: -2px; color: #fff; font-size: 14px; white-space: pre; }
.tt { font: 700 15px/16px "Liberation Serif", serif; }
.qq { font: 700 14px/16px "Liberation Sans", sans-serif; }
.wt > i { width: 1px; height: 13px; background: currentColor; }
.body { flex: 1; display: flex; flex-direction: column; min-height: 0; background: #e9e9e9; white-space: nowrap; }

.btn { display: inline-flex; align-items: center; justify-content: center; height: 20px; padding: 0 2px; flex: none; border: 1px solid #8f8f8f; background: linear-gradient(#fafafa, #e4e4e4); color: #111; }
.sb { display: flex; align-items: center; justify-content: center; width: 19px; height: 20px; flex: none; border: 1px solid #9a9a9a; background: #f2f2f2; color: #777; }
input[type="text"], select { height: 20px; border: 1px solid #7f7f7f; background-color: #fff; padding: 0 3px; min-width: 0; }
input.n { text-align: right; }
select { appearance: none; background: #fff url("data:image/svg+xml,%3Csvg xmlns='http://www.w3.org/2000/svg' width='14' height='30'%3E%3Cpath d='M0 0h14v30H0z' fill='%23efefef'/%3E%3Cpath d='M0 0v30' stroke='%239a9a9a' stroke-width='2'/%3E%3Cpath d='M4 13h7l-3 4h-1z' fill='%23666'/%3E%3C/svg%3E") no-repeat right center; }
select.kr { font-size: 11px; padding: 0 13px 0 1px; font-family: "Noto Sans CJK KR", sans-serif; }
input:disabled { background: #ececec; border-color: #a5a5a5; color: #888; }
.w33 { width: 33px; } .w35 { width: 35px; } .w44 { width: 44px; } .w53 { width: 53px; } .w55 { width: 55px; } .w58 { width: 58px; } .w60 { width: 60px; } .w72 { width: 72px; }
.w80 { width: 80px; } .w95 { width: 95px; } .w97 { width: 97px; } .w104 { width: 104px; } .w114 { width: 114px; } .w182 { width: 182px; }
.grow { flex: 1; width: 0; } .ctr { text-align: center; text-align-last: center; }
input.slashes { padding-left: 28px; white-space: pre; }
.stock { flex: 1; height: 20px; overflow: hidden; border: 1px solid #8f8f8f; background: linear-gradient(135deg, transparent 50%, #999 50%) right bottom / 7px 7px no-repeat #fafafa; line-height: 18px; color: #333; }
.stock b { display: inline-block; width: 15px; margin: 0 3px 0 1px; background: #d2d2d2; font-weight: 400; text-align: center; line-height: 17px; color: #000; }
.code { width: 94px; }
.bar { display: flex; gap: 2px; height: 25px; padding: 2px 1px; align-items: flex-start; }
.bar .code { margin-right: -2px; }
.unit { line-height: 20px; padding-right: 4px; }
.gray { background: #d2d2d2; border-bottom: 1px solid #aaa; }
.gridb { display: flex; align-items: center; justify-content: center; width: 20px; height: 20px; border: 1px solid #999; background: #f2f2f2; }

.tabs { display: flex; height: 19px; border-bottom: 1px solid #5b8cc8; }
.tabs button { border: 1px solid #a4a4a4; border-bottom: 0; background: #dcdcdc; color: #777; height: 18px; line-height: 15px; }
.tabs .on { height: 19px; border-color: #5b8cc8; background: #e9e9e9; color: #111; }
.tabs.t100 { height: 18px; }
.t100 button { width: 100px; height: 17px; }
.t100 .on { height: 18px; }
.half button, .half2 button { flex: 1; }
.half .on, .half2 .on { background: #f0f0f0; }

table { border-collapse: collapse; table-layout: fixed; width: 100%; }
th { font-weight: 400; padding: 0; }
td { padding: 0 2px; overflow: hidden; }
.c { text-align: center; } .r { text-align: right; }
.fl { float: left; margin: 4px 0 0; }
.grid { background: #fdfdfe; }
.grid th { background: #dce4ef; border: 1px solid #b9bcc2; border-top: 0; }
.grid td { border: 1px solid #c4c4c4; }
.grid th:first-child, .grid td:first-child { border-left: 0; }
.grid .sel td { background: #c9e6f1; }
.grid .g td { background: #e6e6e6; }
.scroller { display: flex; min-height: 0; border: 1px solid #888; background: #fdfdfe; }
.scroller > table { flex: 1; width: 0; align-self: flex-start; }
.vs { width: 17px; flex: none; display: flex; flex-direction: column; background: #f1f1f1; }
.vs i { height: 17px; flex: none; position: relative; }
.vs i::before { content: ""; position: absolute; left: 6px; top: 7px; width: 5px; height: 5px; border: solid #555; border-width: 2px 0 0 2px; transform: rotate(45deg); }
.vs .d::before { top: 4px; border-width: 0 2px 2px 0; }
.vs b { width: 16px; background: #cdcdcd; }
.vs .d { margin-top: auto; }
.th62 { height: 62px; } .th44 { height: 44px; } .th26 { height: 26px; } .th38 { height: 38px; margin-top: 27px; } .vs .full { flex: 1; }

.book { background: #fdfdfe; border: 1px solid #8a8a8a; line-height: 14px; }
.book th, .book tfoot td { background: #f0f0f0; border: 1px solid #b5b5b5; }
.book th { border-bottom-color: #888; height: 16px; }
.book tbody td { border: solid #b5b5b5; border-width: 0 1px; text-align: right; height: 16px; line-height: 14px; padding: 0 2px; }
.book tfoot td { text-align: right; height: 17px; padding: 0 2px; border-top-color: #888; }
.book .cut td { border-top: 1px solid #888; }
.book tfoot .c { text-align: center; }
.lit { background: #e0e9fa; }
.book .info { padding: 0; vertical-align: top; }
.book tr:not(.cut) .info { border-bottom: 1px solid #888; }
.inf { display: flex; }
dl { display: grid; text-align: left; }
.inf dl { grid-template-columns: 53px 1fr; flex: 1; align-content: start; padding-left: 6px; line-height: 16px; }
.inf .au { margin-left: 6px; }
.side { width: 17px; }
.side button { display: block; width: 18px; height: 18px; border: 1px solid #9a9a9a; background: #ececec; line-height: 16px; }
.ohl { grid-template-columns: 57px 1fr; column-gap: 6px; line-height: 20px; }
.ohl dt { text-align: right; }
.ohl2 { grid-template-columns: 62px 1fr; column-gap: 6px; line-height: 15px; }
.ohl2 dt { text-align: right; }

.upper { display: flex; height: 226px; border-bottom: 1px solid #aaa; }
.ul { width: 312px; padding: 1px 2px 0 1px; border-right: 1px solid #aaa; }
.ul .bar { height: 25px; border-bottom: 1px solid #b5b5b5; margin-bottom: 2px; padding-top: 1px; }
.ur { flex: 1; padding: 2px 0 0 3px; }
.radios { display: flex; align-items: center; height: 25px; padding-right: 4px; }
.radios label { margin-right: 7px; }
input[type="radio"] { appearance: none; width: 13px; height: 13px; border: 1px solid #555; border-radius: 50%; background: #fff; vertical-align: -2px; margin: 0 2px; }
input[type="radio"]:checked { background: radial-gradient(#333 0 3px, #fff 4px); }
.ur .scroller { height: 178px; }
.quotes th { height: 38px; line-height: 14px; }
.quotes td { height: 19px; }
.quotes tbody td { border-top: 0; border-bottom: 0; }
.quotes .rest td { height: 4px; }

.lower { display: flex; flex: 1; min-height: 0; }
.ll { flex: 1; display: flex; flex-direction: column; padding: 4px 0 0 1px; border-right: 1px solid #aaa; }
.tabs.ord { height: 21px; }
.ord button { height: 20px; padding: 0 6px; }
.ord button:first-child { padding: 0 7px; }
.ord .on { height: 21px; }
.filter { display: flex; align-items: center; height: 29px; background: #d2d2d2; border-bottom: 1px solid #aaa; padding: 0 5px 0 3px; gap: 4px; color: #333; }
.filter .sb { margin-left: -4px; }
.filter .btn { width: 44px; }
.filter .btn + .btn { margin-left: -4px; }
.filter .dim { color: #777; }
.orders { flex: 1; margin-top: 5px; border-bottom: 0; }
.ot { flex: 1; }
.orders th, .orders td { height: 20px; }
.hs { display: flex; align-items: center; height: 15px; background: #f1f1f1; }
.hs i { width: 17px; position: relative; height: 15px; }
.hs i::before { content: ""; position: absolute; left: 6px; top: 5px; width: 5px; height: 5px; border: solid #555; border-width: 0 0 2px 2px; transform: rotate(45deg); }
.hs .r { margin-left: auto; }
.hs .r::before { border-width: 2px 2px 0 0; left: 2px; }
.hs b { width: 321px; height: 15px; background: #cdcdcd; }
.lr { width: 263px; padding-left: 2px; display: flex; flex-direction: column; }
.acct { display: flex; gap: 4px; padding: 3px; }
.acct .sb + .sb { margin-left: -5px; }
.otabs { display: flex; height: 21px; border-bottom: 1px solid #e8443c; }
.otabs button { width: 80px; height: 20px; border: 1px solid #aaa; border-bottom: 0; color: #666; }
.otabs .buy { height: 21px; border-color: #e8443c; background: #f6d0cb; color: #e8220f; }
.otabs .sell { background: #b9cbe2; }
.otabs .fix { background: #c8d2b2; }
.order { flex: 1; background: #f6d0cb; padding: 3px 0 0 5px; }
.f { display: flex; align-items: center; height: 21px; color: #444; }
.f > label { width: 40px; }
.in { padding-left: 40px; }
.f em { margin: 0 4px; }
.f input, .f select, .f .stock { flex: none; color: #111; }
.f input:disabled { color: #888; }
.f input.yel { background: #fffbcf; }
.spin { display: flex; flex-direction: column; align-items: center; justify-content: space-around; width: 15px; height: 20px; border: 1px solid #8f8f8f; border-left: 0; background: #eee; }
.spin i { border-width: 3px; border-bottom-color: #666; }
.spin .ad { border-color: transparent; border-top-color: #666; }
.tiny { width: 19px; padding: 0; }
.act { display: flex; gap: 2px; padding: 22px 0 0 12px; }
.act .btn { width: 62px; height: 24px; }
.act .go { background: #dc3968; border-color: #b82c54; color: #fff; }
.act input[type="text"] { height: 24px; margin-left: 2px; }
.status { display: flex; align-items: center; height: 22px; flex: none; border-top: 1px solid #c2c2c2; background: #e1e1e1; color: #444; }
.status i { width: 3px; height: 13px; margin: 0 2px; background: repeating-linear-gradient(#aaa 0 1px, transparent 1px 3px); }

.b1541 { padding: 2px 2px 0; }
.two { display: flex; gap: 3px; height: 331px; }
.calc { width: 242px; flex: none; border: 1px solid #888; background: #fdfdfe; position: relative; }
.row { display: flex; height: 25px; border-bottom: 1px solid #c0c0c0; }
.row > label, .row .lb { width: 96px; flex: none; background: #f0f0f0; border-right: 1px solid #c0c0c0; text-align: center; line-height: 24px; }
.row > div { flex: 1; min-width: 0; display: flex; align-items: center; padding: 0 4px 0 2px; }
.row em { flex: 1; text-align: right; }
.row input.lft { text-align: left; }
.mid { align-items: center; justify-content: center; }
.row .rd { justify-content: center; gap: 10px; }
.calc p { padding: 8px 3px 0; line-height: 14px; color: #e8220f; }
.cb { position: absolute; right: 4px; bottom: 4px; display: flex; }
.binfo { flex: 1; width: 0; background: #fdfdfe; border: 1px solid #888; }
.binfo td, .binfo th { height: 22px; border: 1px solid #c0c0c0; }
.binfo th { text-align: left; font-weight: 700; padding-left: 3px; }
.binfo .lab { background: #f0f0f0; text-align: center; padding: 0; }
.flow { margin: 3px 0; height: 162px; }
.flow th { height: 20px; }
.flow td { height: 20px; }
.b1541 .status { margin: 0 -2px; flex: 1; }

.b1545 .bar { padding: 2px 1px 2px 2px; }
.b1545 .stock { flex: 0 0 121px; }
.cols { display: flex; gap: 5px; padding: 2px 1px 0 2px; }
.cl { width: 300px; flex: none; }
.cr { flex: 1; }
.book.small tbody td, .book.small tfoot td { height: 15px; }
.book.small th { height: 15px; }
.small .now td, .book.small .now th { height: 19px; text-align: right; border: 0; padding: 0 2px; }
.book.small .now th { text-align: center; border-right: 1px solid #b5b5b5; }
.small .now span { display: inline-block; width: 42px; margin-right: 8px; }
.half { margin-top: 2px; }
.b1545 .cl .scroller { margin-top: 2px; height: 113px; }
.trades th { height: 19px; }
.trades td { height: 18px; }
.trades tbody td { border-top: 0; border-bottom: 0; }
.basic { background: #fdfdfe; border: 1px solid #888; margin-top: 1px; }
.basic td { height: 18px; border: 1px solid #c0c0c0; line-height: 16px; padding: 0 4px; }
.basic td:last-child { padding-right: 0; }
.basic .lab { background: #f0f0f0; }
.cbar { display: flex; height: 26px; align-items: center; margin-left: 1px; background: #d2d2d2; }
.day { width: 19px; height: 20px; border: 0; background: #4a7ec4; color: #fff; }
.chart { display: block; outline: 1px solid #8c8f95; outline-offset: -1px; }
.leg text { font-size: 12px; }
.play { display: flex; height: 19px; padding-top: 1px; }
.play button { width: 17px; border: 1px solid #999; background: #f4f4f4; font: 8px/8px "DejaVu Sans", sans-serif; }
.play span { flex: 1; border: 1px solid #999; background: #ececec; }

.b1546 .bar { padding: 1px 5px; }
.b1546 .scroller { margin: 2px 3px 3px; flex: 1; }
.ranks th { height: 18px; }
.ranks td { height: 18px; line-height: 16px; }
.ranks tbody td { border-top: 0; border-bottom: 0; }
.ranks .name { padding: 0 1px; }

.mark { position: absolute; border: 6px solid #ed1c24; border-radius: 3px; }
.note { position: absolute; display: flex; flex-direction: column; transform: translateY(-50%); color: #ed1c24; font: 900 49px/65px "Noto Sans CJK KR", sans-serif; -webkit-text-stroke: 1px #ed1c24; white-space: nowrap; }
.badge { position: absolute; display: flex; align-items: center; justify-content: center; width: 42px; height: 42px; transform: translate(-50%, -50%); border: 3px solid #fff; border-radius: 50%; background: #d96446; box-shadow: 1px 2px 3px rgba(0, 0, 0, 0.4); color: #fff; font: 700 23px/1 "Liberation Sans", sans-serif; }
.badge.big { width: 46px; height: 46px; font-size: 25px; }

.ticker { display: flex; height: 47px; border-top: 1px solid #e6ecf8; background: #c3d1ec; white-space: nowrap; }
.ticker .grip i { height: 32px; }
.rows { flex: 1; }
.trow { display: flex; align-items: center; height: 23px; }
.trow + .trow { border-top: 1px solid #e6ecf8; }
.nm { width: 76px; flex: none; height: 22px; padding-left: 8px; line-height: 22px; background: #aec3ee; font-weight: 400; font-size: 12px; color: #222; }
.us { width: 74px; }
.vals { display: flex; flex: none; align-items: center; width: 380px; height: 22px; padding: 0 11px 0 10px; border-right: 1px solid #e6ecf8; }
.vals span { width: 64px; } .vals span:nth-child(2) { width: 55px; } .vals span:nth-child(3) { width: 45px; } .vals .k.k { flex: 1; color: #111; }
.navy { color: #1818c0; width: 378px; }
.navy span:nth-child(1) { width: 70px; } .navy span:nth-child(2) { width: 55px; } .navy span:nth-child(3) { width: 50px; }
.vals .tri, .trow > .tri { color: #666; }
.news { flex: 1; padding-left: 8px; }
.tm { width: 61px; } .src { width: 74px; }
.nb, .nb2 { width: 94px; height: 22px; margin-left: 6px; }
.nb { border: 0; background: #dc7b48; color: #fff; }
.nb2 { display: flex; align-items: center; gap: 12px; padding-left: 4px; }
.nb2 svg { color: #777; }
</style>
